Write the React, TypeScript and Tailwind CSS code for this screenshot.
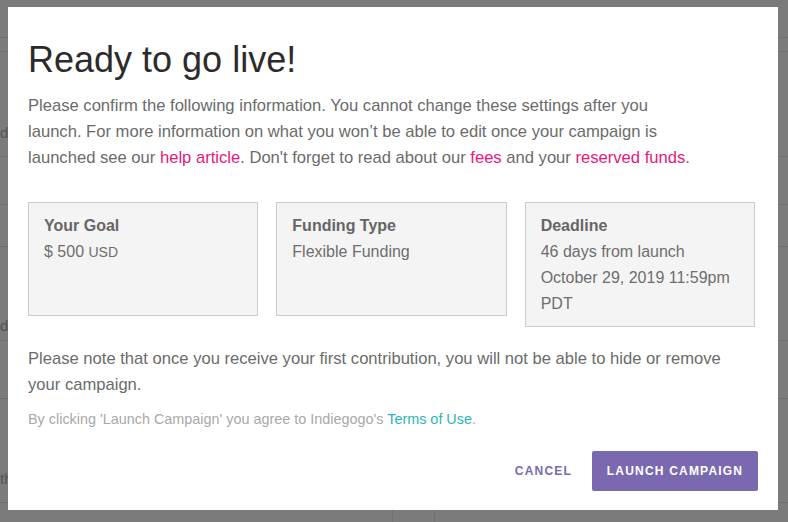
import React from "react"

/**
 * A single summary box in the launch confirmation dialog.
 */
type InfoCardProps = {
  title: string
  children: React.ReactNode
}

function InfoCard(props: InfoCardProps) {
  const { title, children } = props

  return (
    <div className="min-h-[114px] border border-[#cdcdcd] bg-[#f4f4f4] px-[15px] pt-[10px] pb-[9px] text-[16px] leading-[26px] text-[#6e6e6e]">
      <div className="font-bold text-[#666666]">{title}</div>
      {children}
    </div>
  )
}

/**
 * Page behind the overlay, only its left and bottom edges show.
 */
function BackgroundPage() {
  return (
    <div className="flex h-full w-full flex-col bg-[#7b7b7b] text-[15px] text-[#555555]">
      <div className="h-[38px] shrink-0 border-b border-[#6f6f6f]" />
      <div className="h-[14px] shrink-0 border-b border-[#6f6f6f]" />
      <div className="flex h-[105px] shrink-0 items-end border-b border-[#6f6f6f] pb-[12px]">
        <span>d</span>
      </div>
      <div className="h-[48px] shrink-0 border-b border-[#6f6f6f]" />
      <div className="h-[42px] shrink-0 border-b border-[#6f6f6f]" />
      <div className="flex h-[94px] shrink-0 items-end border-b border-[#6f6f6f] pb-[3px]">
        <span>de</span>
      </div>
      <div className="h-[58px] shrink-0 border-b border-[#6f6f6f]" />
      <div className="flex h-[104px] shrink-0 items-end border-b border-[#6f6f6f] pb-[12px]">
        <span>th</span>
      </div>
      <div className="flex flex-1">
        <div className="w-[393px] border-r border-[#6f6f6f]" />
        <div className="w-[42px] border-r border-[#6f6f6f]" />
      </div>
    </div>
  )
}

export default function App() {
  return (
    <div
      className="relative h-[522px] w-[788px] overflow-hidden"
      style={{ fontFamily: "'Liberation Sans', Arial, sans-serif" }}
    >
      <BackgroundPage />

      {/* modal */}
      <div className="absolute top-[7px] left-[8px] flex h-[503px] w-[770px] flex-col bg-white px-[20px] pt-[31px]">
        <h1 className="text-[36px] leading-[44px] text-[#2b2b2b]">
          Ready to go live!
        </h1>

        <p className="mt-[11px] text-[16.6px] leading-[26px] text-[#6b6b6b]">
          Please confirm the following information. You cannot change these
          settings after you
          <br />
          launch. For more information on what you won’t be able to edit once
          your campaign is
          <br />
          launched see our <span className="text-[#e5177b]">help article</span>
          . Don't forget to read about our{" "}
          <span className="text-[#e5177b]">fees</span> and your{" "}
          <span className="text-[#e5177b]">reserved funds</span>.
        </p>

        <div className="mt-[31px] grid w-[727px] grid-cols-3 items-start gap-[18px]">
          <InfoCard title="Your Goal">
            <div>
              $ 500 <span className="text-[14px]">USD</span>
            </div>
          </InfoCard>
          <InfoCard title="Funding Type">
            <div>Flexible Funding</div>
          </InfoCard>
          <InfoCard title="Deadline">
            <div>46 days from launch</div>
            <div>October 29, 2019 11:59pm</div>
            <div>PDT</div>
          </InfoCard>
        </div>

        <p className="mt-[19px] text-[16.6px] leading-[26px] text-[#6b6b6b]">
          Please note that once you receive your first contribution, you will
          not be able to hide or remove
          <br />
          your campaign.
        </p>

        <p className="mt-[10px] text-[14.4px] leading-[22px] text-[#a8a8a8]">
          By clicking 'Launch Campaign' you agree to Indiegogo's{" "}
          <span className="text-[#2ab6b4]">Terms of Use</span>.
        </p>

        <div className="mt-[21px] flex items-center justify-end gap-[20px]">
          <button className="text-[12px] font-bold tracking-[1.2px] text-[#7b69af]">
            CANCEL
          </button>
          <button className="h-[40px] w-[166px] rounded-[2px] bg-[#7b69af] text-[12px] font-bold tracking-[1.2px] text-white">
            LAUNCH CAMPAIGN
          </button>
        </div>
      </div>
    </div>
  )
}
